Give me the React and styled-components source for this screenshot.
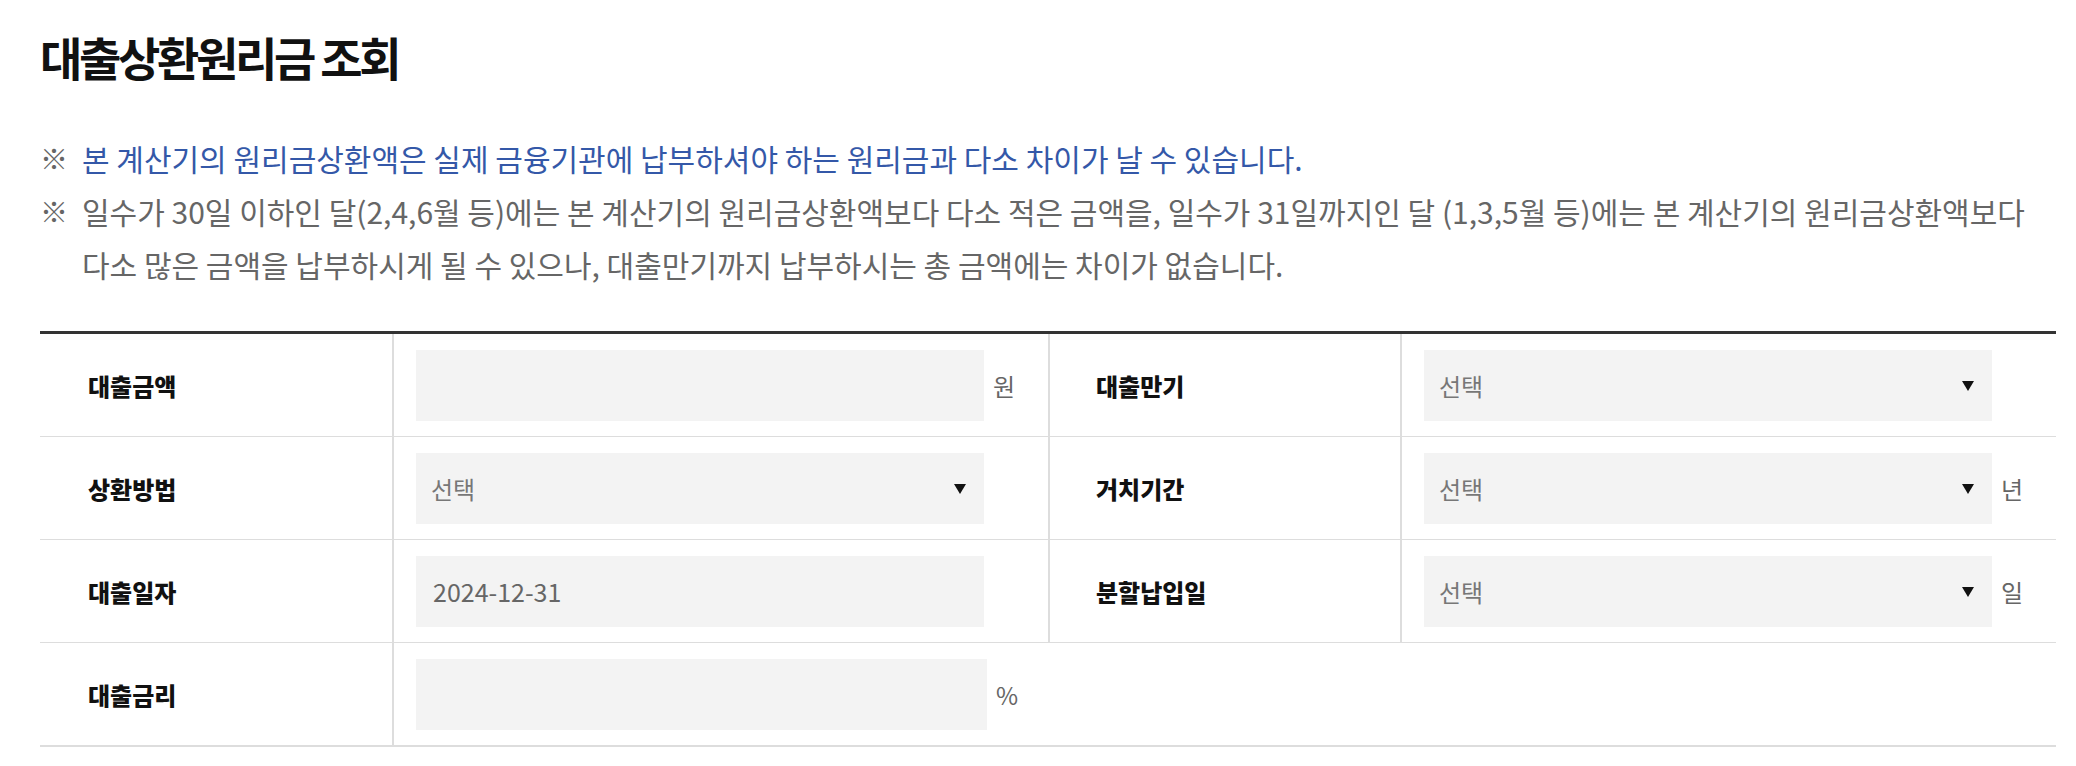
import React from 'react';
import styled, {createGlobalStyle} from 'styled-components';

const GlobalStyle = createGlobalStyle`
    * {
        box-sizing: border-box;
    }

    body {
        margin: 0;
        background: #ffffff;
        font-family: "Noto Sans CJK KR", "Noto Sans", sans-serif;
    }
`;

const Page = styled.div`
    padding: 26px 20px 0 40px;
    width: 2076px;
`;

const Title = styled.h2`
    margin: 0;
    font-size: 46px;
    line-height: 60px;
    font-weight: 700;
    letter-spacing: -3.3px;
    color: #111111;
`;

const Notes = styled.ul`
    margin: 46px -20px 0 0;
    padding: 0;
    list-style: none;
`;

const Note = styled.li`
    display: flex;
    font-size: 30px;
    line-height: 53px;
    word-break: keep-all;
    color: ${props => props.highlight ? '#3458a8' : '#666666'};
`;

const Mark = styled.span`
    flex: 0 0 42px;
    font-size: 28px;
    color: #666666;
`;

const Table = styled.div`
    margin-top: 40px;
    width: 2016px;
    border-top: 3px solid #333333;
    border-bottom: 1px solid #dddddd;
`;

const Row = styled.div`
    display: grid;
    grid-template-columns: 352px 656px 352px 656px;
    height: 103px;
    border-bottom: 1px solid #dddddd;
`;

const Label = styled.div`
    display: flex;
    align-items: center;
    padding-left: ${props => props.divided ? '46px' : '48px'};
    border-left: ${props => props.divided ? '2px solid #dddddd' : 'none'};
    font-size: 24px;
    font-weight: 900;
    color: #111111;
`;

const Field = styled.div`
    display: flex;
    align-items: center;
    gap: 9px;
    padding-left: 22px;
    border-left: 2px solid #dddddd;
    grid-column: ${props => props.span ? `span ${props.span}` : 'auto'};
`;

const TextInput = styled.input`
    width: ${props => props.wide ? '571px' : '568px'};
    height: 71px;
    padding: 0 17px;
    border: none;
    outline: none;
    background: #f3f3f3;
    font-family: inherit;
    font-size: 25px;
    color: #666666;
`;

const SelectWrap = styled.div`
    position: relative;
    width: 568px;
    height: 71px;
`;

const Select = styled.select`
    width: 100%;
    height: 100%;
    padding: 0 40px 0 15px;
    border: none;
    outline: none;
    border-radius: 0;
    appearance: none;
    background: #f3f3f3;
    font-family: inherit;
    font-size: 24px;
    color: #777777;
`;

const Arrow = styled.svg`
    position: absolute;
    right: 18px;
    top: 31px;
    pointer-events: none;
`;

const Unit = styled.span`
    font-size: 24px;
    color: #666666;
`;

const Dropdown = () => (
    <SelectWrap>
        <Select defaultValue="">
            <option value="">선택</option>
        </Select>
        <Arrow width="12" height="10" viewBox="0 0 12 10">
            <path d="M0 0 L12 0 L6 10 Z" fill="#111111" />
        </Arrow>
    </SelectWrap>
);

const App = () => {
    return (
        <Page>
            <GlobalStyle />
            <Title>대출상환원리금 조회</Title>

            <Notes>
                <Note highlight>
                    <Mark>※</Mark>
                    <span>본 계산기의 원리금상환액은 실제 금융기관에 납부하셔야 하는 원리금과 다소 차이가 날 수 있습니다.</span>
                </Note>
                <Note>
                    <Mark>※</Mark>
                    <span>일수가 30일 이하인 달(2,4,6월 등)에는 본 계산기의 원리금상환액보다 다소 적은 금액을, 일수가 31일까지인 달 (1,3,5월 등)에는 본 계산기의 원리금상환액보다 다소 많은 금액을 납부하시게 될 수 있으나, 대출만기까지 납부하시는 총 금액에는 차이가 없습니다.</span>
                </Note>
            </Notes>

            <Table>
                <Row>
                    <Label>대출금액</Label>
                    <Field>
                        <TextInput type="text" />
                        <Unit>원</Unit>
                    </Field>
                    <Label divided>대출만기</Label>
                    <Field>
                        <Dropdown />
                    </Field>
                </Row>
                <Row>
                    <Label>상환방법</Label>
                    <Field>
                        <Dropdown />
                    </Field>
                    <Label divided>거치기간</Label>
                    <Field>
                        <Dropdown />
                        <Unit>년</Unit>
                    </Field>
                </Row>
                <Row>
                    <Label>대출일자</Label>
                    <Field>
                        <TextInput type="text" defaultValue="2024-12-31" />
                    </Field>
                    <Label divided>분할납입일</Label>
                    <Field>
                        <Dropdown />
                        <Unit>일</Unit>
                    </Field>
                </Row>
                <Row>
                    <Label>대출금리</Label>
                    <Field span={3}>
                        <TextInput type="text" wide />
                        <Unit>%</Unit>
                    </Field>
                </Row>
            </Table>
        </Page>
    );
};

export default App;
